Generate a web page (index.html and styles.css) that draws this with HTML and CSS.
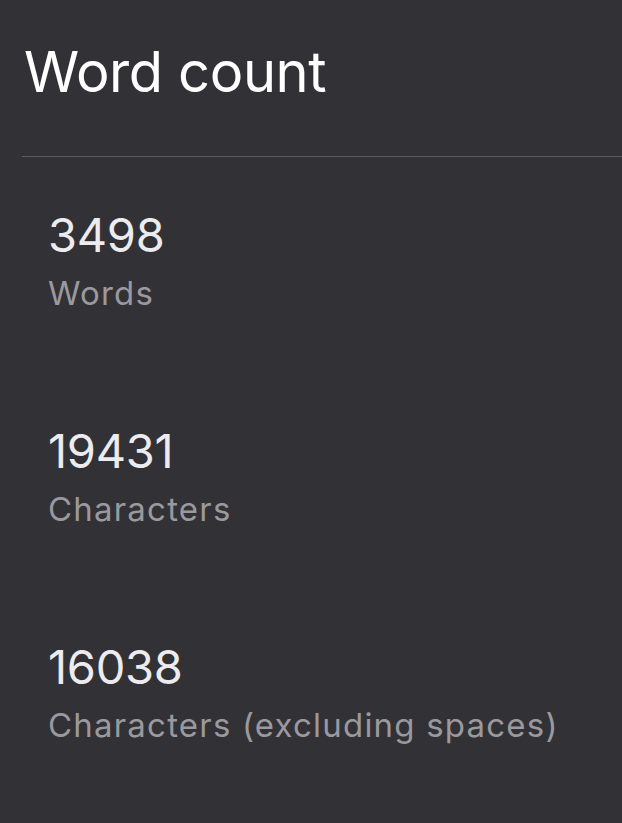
FILE: index.html
```html
<!DOCTYPE html>
<html>
<head>
<meta charset="utf-8">
<link rel="stylesheet" href="styles.css">
</head>
<body>
<div class="screen">
  <header class="header">
    <h1 class="title">Word count</h1>
  </header>
  <ul class="stats">
    <li class="stat">
      <div class="stat-value">3498</div>
      <div class="stat-label">Words</div>
    </li>
    <li class="stat">
      <div class="stat-value">19431</div>
      <div class="stat-label">Characters</div>
    </li>
    <li class="stat">
      <div class="stat-value">16038</div>
      <div class="stat-label">Characters (excluding spaces)</div>
    </li>
  </ul>
</div>
</body>
</html>
```

FILE: styles.css
```css
html, body {
  margin: 0;
  padding: 0;
  background: #323136;
}
.screen {
  width: 622px;
  height: 823px;
  overflow: hidden;
  font-family: Inter, "Noto Sans", sans-serif;
  background: #323136;
}
.header {
  margin-left: 22px;
  border-bottom: 1px solid #5c5b60;
  padding: 42px 0 54px 2px;
}
.title {
  margin: 0;
  font-size: 56px;
  font-weight: 400;
  line-height: 60px;
  color: #ffffff;
  letter-spacing: -0.4px;
}
.stats {
  list-style: none;
  margin: 0;
  padding: 0 0 0 48px;
}
.stat {
  height: 216px;
  display: flex;
  flex-direction: column;
  padding-top: 53px;
  box-sizing: border-box;
}
.stat-value {
  font-size: 47px;
  line-height: 50px;
  letter-spacing: -0.3px;
  color: #ececef;
}
.stat-label {
  margin-top: 13px;
  font-size: 33px;
  line-height: 40px;
  letter-spacing: 1.2px;
  color: #9a999e;
}
```
